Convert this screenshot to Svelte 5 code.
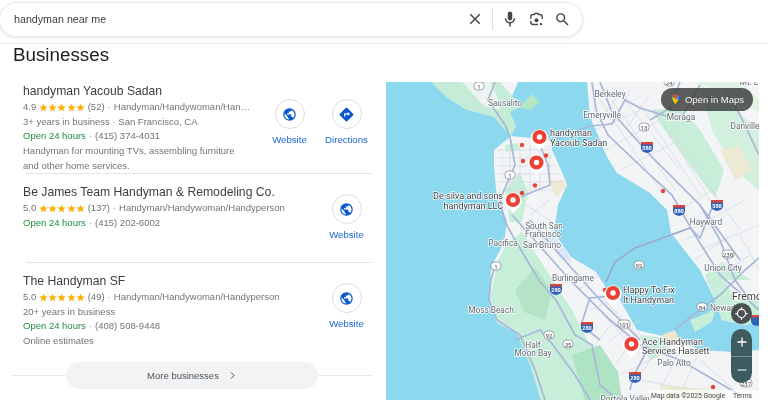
<script>
  const stars = [0, 1, 2, 3, 4];
  const businesses = [
    { name: 'handyman Yacoub Sadan', rating: '4.9', count: '(52)', cat: 'Handyman/Handywoman/Han…', extra: '3+ years in business · San Francisco, CA', phone: '(415) 374-4031', notes: ['Handyman for mounting TVs, assembling furniture', 'and other home services.'], directions: true, cls: 'r1' },
    { name: 'Be James Team Handyman & Remodeling Co.', rating: '5.0', count: '(137)', cat: 'Handyman/Handywoman/Handyperson', extra: '', phone: '(415) 202-6002', notes: [], directions: false, cls: 'r2' },
    { name: 'The Handyman SF', rating: '5.0', count: '(49)', cat: 'Handyman/Handywoman/Handyperson', extra: '20+ years in business', phone: '(408) 508-9448', notes: ['Online estimates'], directions: false, cls: 'r3' }
  ];
  const pins = [[539.5, 137], [536.5, 162.5], [513, 200], [613, 293], [631.5, 344]];
  const dots = [[522, 145], [523, 161], [546, 155.5], [535, 185.5], [522, 193], [663, 191], [605, 290], [713, 387]];
  const shields = [[647, 147, '580'], [679, 210, '880'], [717, 205, '580'], [556, 289, '280'], [587, 327, '280'], [635, 377, '280'], [757, 320, '']];
  const badges = [[479, 86, '1'], [644, 127, '13'], [510, 175, '1'], [496, 266, '1'], [639, 265, '92'], [549, 335, '92'], [568, 344, '35'], [624, 324, '101'], [702, 307, '84'], [728, 254, '238'], [746, 383, '237'], [669, 82, '24']];
  const labels = [
    [505, 106, 'Sausalito'], [610, 97, 'Berkeley'], [602, 118, 'Emeryville'], [681, 120, 'Moraga'], [745, 129, 'Danville'], [749, 85, 'Mt. L'],
    [544, 229, 'South San'], [543, 237, 'Francisco'], [503, 246, 'Pacifica'], [542, 248, 'San Bruno'],
    [706, 225, 'Hayward'], [723, 271, 'Union City'], [573, 281, 'Burlingame'], [491, 313, 'Moss Beach'],
    [533, 348, 'Half'], [533, 356, 'Moon Bay'], [674, 366, 'Palo Alto'], [724, 311, 'Newark'], [626, 402, 'Portola Valley']
  ];
  const pinLabels = [
    [550, 136, 'handyman', 'start'], [550, 146, 'Yacoub Sadan', 'start'], [503, 199, 'De silva and sons', 'end'], [503, 209, 'handyman LLC', 'end'],
    [623, 293, 'Happy To Fix', 'start'], [623, 303, 'It Handyman', 'start'], [642, 344.5, 'Ace Handyman', 'start'], [642, 354, 'Services Hassett', 'start']
  ];
</script>

<div class="page">
  <header class="top">
    <div class="search">
      <span class="query">handyman near me</span>
      <div class="tools">
        <svg class="ic" viewBox="0 0 24 24"><path d="M19 6.4 17.6 5 12 10.6 6.4 5 5 6.4 10.6 12 5 17.6 6.4 19 12 13.4 17.6 19 19 17.6 13.4 12z" fill="#444746"/></svg>
        <span class="sep"></span>
        <svg class="ic mic" viewBox="0 0 24 24"><path d="M12 14c1.7 0 3-1.3 3-3V5c0-1.7-1.3-3-3-3S9 3.3 9 5v6c0 1.7 1.3 3 3 3zm5-3c0 2.8-2.2 5-5 5s-5-2.2-5-5H5c0 3.5 2.6 6.4 6 6.9V22h2v-4.100c3.400-.5 6-3.400 6-6.900h-2z" fill="#444746"/></svg>
        <svg class="ic lens" viewBox="0 0 24 24"><circle cx="12" cy="13" r="2.8" fill="#444746"/><circle cx="18.2" cy="18.5" r="1.7" fill="#444746"/><path d="M4 11V8a3 3 0 0 1 3-3h2l1-1.500h4L15 5h2a3 3 0 0 1 3 3v3M4 14v2a3 3 0 0 0 3 3h7" fill="none" stroke="#444746" stroke-width="2"/></svg>
        <svg class="ic glass" viewBox="0 0 24 24"><path d="M15.5 14h-.79l-.28-.27A6.471 6.471 0 0 0 16 9.5 6.5 6.5 0 1 0 9.5 16c1.61 0 3.09-.59 4.23-1.57l.27.28v.79l5 4.99L20.49 19l-4.99-5zm-6 0C7.01 14 5 11.99 5 9.5S7.01 5 9.5 5 14 7.01 14 9.5 11.99 14 9.500 14z" fill="#444746"/></svg>
      </div>
    </div>
  </header>

  <h2 class="heading">Businesses</h2>

  <div class="content">
    <section class="list">
      {#each businesses as b, i}
        <article class="biz {b.cls}">
          <div class="info">
            <div class="name">{b.name}</div>
            <div class="line">
              {b.rating}
              <span class="stars">
                {#each stars as s}
                  <svg viewBox="0 0 24 24"><path d="M12 1.8l3.100 7 7.600.7-5.800 5 1.800 7.500L12 18l-6.700 4 1.800-7.500-5.800-5 7.600-.7z" fill="#fbb005"/></svg>
                {/each}
              </span>
              {b.count} <span class="dot">·</span> {b.cat}
            </div>
            {#if b.extra}<div class="line">{b.extra}</div>{/if}
            <div class="line"><span class="open">Open 24 hours</span> <span class="dot">·</span> {b.phone}</div>
            {#each b.notes as n}<div class="line">{n}</div>{/each}
          </div>
          <div class="actions">
            <div class="action">
              <span class="circle">
                <svg viewBox="0 0 24 24"><path d="M12 2a10 10 0 1 0 0 20 10 10 0 0 0 0-20zM4 12c0-.6.1-1.200.2-1.800L9 15v1c0 1.100.9 2 2 2v2a8 8 0 0 1-7-8zm13.900 5.400c-.3-.8-1-1.400-1.900-1.400h-1v-3c0-.6-.4-1-1-1H8v-2h2c.6 0 1-.4 1-1V7h2c1.100 0 2-.9 2-2v-.4a8 8 0 0 1 2.900 12.800z" fill="#0b57d0"/></svg>
              </span>
              <span class="label">Website</span>
            </div>
            {#if b.directions}
              <div class="action">
                <span class="circle">
                  <svg viewBox="0 0 24 24"><path d="M22.400 10.600 13.400 1.600a2 2 0 0 0-2.800 0l-9 9a2 2 0 0 0 0 2.800l9 9a2 2 0 0 0 2.800 0l9-9a2 2 0 0 0 0-2.800zM14 14.500V12h-4v3H8v-4c0-.6.4-1 1-1h5V7.500l3.500 3.500-3.500 3.500z" fill="#0b57d0"/></svg>
                </span>
                <span class="label">Directions</span>
              </div>
            {/if}
          </div>
        </article>
        {#if i < 2}<hr class="rule" />{/if}
      {/each}
      <div class="more-row">
        <span class="more-line"></span>
        <button class="more">More businesses
          <svg viewBox="0 0 24 24"><path d="M8 4l8 8-8 8" fill="none" stroke="#4d5156" stroke-width="2.6"/></svg>
        </button>
        <span class="more-line"></span>
      </div>
    </section>

    <div class="map">
      <svg class="mapsvg" viewBox="386 82 373 318">
        <rect x="386" y="82" width="373" height="318" fill="#8bd8ef"/>
        <!-- Marin -->
        <path d="M431 82 447 98 467 110 494 117 505 130 511 136 516 126 510 112 522 106 512 96 518 82Z" fill="#c4ecd6"/>
        <path d="M520 108 531 94 540 102 531 110Z" fill="#b4e6c6"/>
        <path d="M462 82 490 82 497 96 500 110 484 106Z" fill="#eef3f0"/>
        <path d="M500 82 518 82 512 96Z" fill="#f2f4f6"/>
        <!-- SF + peninsula + south -->
        <path d="M511 136 551 140 552 150 562 172 567 185 558 205 554 232 571 257 596 272 612 297 620 300 637 330 667 337 680 340 700 350 733 352 759 350V400H541L531 367 517 333 497 323 490 300 491 267 504 243 507 220 497 200 494 167 494 150Z" fill="#f2f4f6"/>
        <path d="M497 262 506 245 522 232 545 268 572 310 590 345 612 400H541L531 367 517 333 497 323 490 300Z" fill="#c7eed9"/>
        <path d="M515 290 535 268 552 290 545 320 524 312Z" fill="#b4e4c5"/>
        <path d="M572 355 600 345 618 372 622 400H585Z" fill="#aee3c3"/>
        <path d="M505 190 520 172 528 192 522 222 510 222Z" fill="#c7eed9"/>
        <path d="M505 145 518 143 520 150 506 152Z" fill="#c7eed9"/>
        <path d="M640 335 664 338 668 352 650 360Z" fill="#c7eed9"/>
        <path d="M662 335 675 330 680 342 668 348Z" fill="#efe7cd"/>
        <path d="M660 385 720 390 715 400H665Z" fill="#efe9d4"/>
        <path d="M548 180 566 180 567 187 556 197Z" fill="#efe9d4"/>
        <path d="M535 232 562 258 572 262 565 248 550 232Z" fill="#dce6f7"/>
        <!-- East bay -->
        <path d="M587 82 590 117 597 133 607 157 617 173 650 193 667 210 671 233 700 270 715 300 722 320 745 325 759 322V82Z" fill="#f2f4f6"/>
        <path d="M651 110 680 108 700 130 724 170 715 198 690 165 668 135Z" fill="#c7eed9"/>
        <path d="M700 85 735 110 759 130V190L735 170 712 130Z" fill="#d2f0de"/>
        <path d="M720 150 740 145 752 170 735 180Z" fill="#ece9d4"/>
        <path d="M696 82 740 82 759 100V112Z" fill="#dff2e4"/>
        <path d="M705 275 722 262 759 285V322L745 325 722 320Z" fill="#c7eed9"/>
        <path d="M725 280 759 280V300L735 300Z" fill="#f2f4f6"/>
        <path d="M690 320 715 310 712 322 695 332Z" fill="#c7eed9"/>
        <!-- Streets -->
        <g stroke="#d3d8e2" stroke-width=".7" fill="none">
          <path d="M498 150H550M498 158H552M498 166H555M498 174H560M498 182H562M500 190H556M510 145V195M520 145V195M530 145V195M540 145V190M550 145V185"/>
          <path d="M600 100 660 190M612 100 675 190M625 100 680 170M640 105 700 195M655 110 710 200M670 130 740 230M595 130 640 110M605 150 660 120M620 170 680 140M680 210 720 185M690 230 745 200M700 250 759 225M618 95 600 120M630 90 612 125M650 95 625 130"/>
          <path d="M590 300 640 355M600 295 665 365M615 320 590 350M640 330 615 365M660 345 640 375M680 350 660 390M700 350 680 395M640 380 720 395M700 360 740 395M578 290 600 275M590 310 612 300M610 340 640 320M630 355 655 340M620 375 650 360"/>
          <path d="M530 215 550 200M526 205 552 222M685 240 715 225M695 260 730 235M705 285 750 255M740 235 759 270"/>
        </g>
        <!-- Highways -->
        <g stroke="#a9b7d8" stroke-width="1.7" fill="none">
          <path d="M495 82 488 100 505 125 510 137 515 165 500 200 505 222 515 240 540 282 556 300 575 335 592 345 600 385 618 400"/>
          <path d="M592 82 596 110 608 135 650 175 672 195 695 235 720 275 759 310"/>
          <path d="M600 82 612 112 650 155 700 205 740 260"/>
          <path d="M553 140 590 126 612 124 625 100 640 108 680 120 700 85"/>
          <path d="M540 145 548 165 550 185 525 195 510 205"/>
          <path d="M512 215 530 235 570 280 610 320 640 345 680 360 740 395"/>
          <path d="M530 220 560 255 600 300 640 340"/>
          <path d="M606 282 615 262 635 248 690 228 700 238 715 200"/>
          <path d="M611 296 590 298 581 325 600 340"/>
          <path d="M496 262 491 280 489 300 497 320 520 335 535 370 545 400"/>
          <path d="M515 340 540 330 553 345 575 375 590 400"/>
          <path d="M646 352 634 375 630 390"/>
          <path d="M674 330 700 310 720 295 745 270 759 258"/>
          <path d="M725 90 740 115 759 155"/>
          <path d="M650 120 670 108 680 82"/>
          <path d="M700 205 720 240 735 280 750 300"/>
        </g>
        <path d="M606 282 615 262 635 248 690 228" stroke="#94a6cc" stroke-width="1.2" fill="none"/>

        {#each shields as [x, y, t]}
          <path d="M{x - 6} {y - 5}h12v6q0 4-6 5q-6-1-6-5z" fill="#2f63b8"/>
          <rect x={x - 6} y={y - 5} width="12" height="2.5" fill="#d8433c"/>
          <text x={x} y={y + 3} class="shield">{t}</text>
        {/each}
        {#each badges as [x, y, t]}
          <rect x={x - (t.length > 2 ? 6 : 5)} y={y - 4} width={t.length > 2 ? 12 : 10} height="8" rx="3.5" fill="#fff" stroke="#77808c" stroke-width=".7"/>
          <text x={x} y={y + 2.5} class="badge">{t}</text>
        {/each}
        {#each labels as [x, y, t]}
          <text x={x} y={y} text-anchor="middle" class="place">{t}</text>
        {/each}
        <text x="732" y="300" class="city">Fremont</text>

        {#each dots as [x, y]}
          <circle cx={x} cy={y} r="2.2" fill="#ea4335"/>
        {/each}
        {#each pins as [x, y]}
          <path d="M{x} {y + 13}l-6.200-6a8.700 8.700 0 1 1 12.400 0z" fill="#fff"/>
          <circle cx={x} cy={y} r="4.9" fill="none" stroke="#ea4335" stroke-width="4.4"/>
        {/each}
        {#each pinLabels as [x, y, t, a]}
          <text x={x} y={y} text-anchor={a} class="pinlabel">{t}</text>
        {/each}
        <rect x="649" y="390" width="110" height="10" fill="#fff" opacity=".7"/>
        <text x="651" y="398" class="attr">Map data ©2025 Google</text>
        <text x="733" y="398" class="attr">Terms</text>
      </svg>

      <div class="open-maps">
        <svg viewBox="0 0 24 24"><path d="M12 1a8 8 0 0 0-8 8c0 5.500 5.500 8.500 8 14V1z" fill="#34a853"/><path d="M12 1a8 8 0 0 1 8 8c0 2-1 3.800-2 5.300L12 9z" fill="#4285f4"/><path d="M12 1a8 8 0 0 0-6.400 3.200L12 9l6-4.500A8 8 0 0 0 12 1z" fill="#ea4335"/><path d="M4.500 7 12 9l6 5.300c-2.200 2.700-4.400 4.700-6 8.700-.5-2-2.200-3.500-3.800-5.500z" fill="#fbbc04"/></svg>
        Open in Maps
      </div>
      <div class="controls">
        <div class="locate">
          <svg viewBox="0 0 24 24"><circle cx="12" cy="12" r="6.5" fill="none" stroke="#fff" stroke-width="2"/><path d="M12 2v4M12 18v4M2 12h4M18 12h4" stroke="#fff" stroke-width="2"/></svg>
        </div>
        <div class="zoombox">
          <span class="zbtn">
            <svg viewBox="0 0 12 12"><path d="M6 1.5v9M1.500 6h9" stroke="#fff" stroke-width="1.300"/></svg>
          </span>
          <span class="zbtn second">
            <svg viewBox="0 0 12 12"><path d="M1.500 6h9" stroke="#cfd8d8" stroke-width="1.300"/></svg>
          </span>
        </div>
      </div>
    </div>
  </div>
</div>

<style>
  :global(body) { margin: 0; background: #fff; }
  .page { width: 768px; height: 407px; overflow: hidden; font-family: "Liberation Sans", Arial, sans-serif; color: #70757a; position: relative; filter: blur(.35px); }
  .top { box-sizing: border-box; height: 44px; padding-top: 2px; border-bottom: 1px solid #ebebeb; }
  .search { box-sizing: border-box; width: 584px; height: 34.5px; margin-left: -1px; background: #fff; border-radius: 18px; border: 1px solid #ebebeb; box-shadow: 0 1px 3px rgba(60, 64, 67, .16); display: flex; align-items: center; padding-left: 14px; justify-content: space-between; }
  .query { font-size: 10.7px; color: #3c4043; }
  .tools { display: flex; align-items: center; margin-right: 11px; }
  .ic { width: 18px; height: 18px; display: block; }
  .sep { width: 1px; height: 22px; background: #dadce0; margin: 0 8px; }
  .lens { margin-left: 9px; width: 17px; height: 17px; }
  .glass { margin-left: 9px; width: 17px; height: 17px; }
  .heading { margin: 0 0 0 13px; font-weight: 400; font-size: 18.8px; line-height: 22px; color: #202124; height: 22px; }
  .content { display: flex; margin-top: 16px; align-items: flex-start; }
  .list { width: 372px; flex: none; }
  .biz { display: flex; padding: 9px 0 0 23px; position: relative; box-sizing: border-box; }
  .r1 { height: 91px; padding-top: 0; }
  .r2 { height: 88px; }
  .r3 { height: 99px; }
  .info { flex: 1; min-width: 0; }
  .name { font-size: 12.2px; line-height: 18px; color: #3c4043; white-space: nowrap; }
  .line { font-size: 9.5px; line-height: 14.7px; white-space: nowrap; display: flex; align-items: center; gap: 3px; color: #70757a; height: 14.7px; }
  .dot { color: #9aa0a6; }
  .open { color: #1e8e3e; }
  .stars { display: inline-flex; }
  .stars svg { width: 9.1px; height: 9.1px; display: block; }
  .actions { display: flex; flex: none; margin: 11px -3px 0 0; }
  .r1 .actions { margin-top: 17px; }
  .action { width: 57px; display: flex; flex-direction: column; align-items: center; }
  .circle { box-sizing: border-box; width: 30px; height: 30px; border-radius: 50%; border: 1px solid #dadce0; display: flex; align-items: center; justify-content: center; background: #fff; }
  .circle svg { width: 15px; height: 15px; display: block; }
  .label { font-size: 9.65px; line-height: 14px; margin-top: 4px; color: #1a66d6; }
  .rule { border: 0; height: 1px; background: #e2e3e5; margin: 0 0 0 26px; }
  .more-row { display: flex; align-items: center; margin: 0 0 0 12px; height: 27px; }
  .more-line { flex: 1; height: 1px; background: #e8eaed; }
  .more { width: 252px; height: 27px; border: 0; border-radius: 14px; background: #f1f3f4; color: #4d5156; font: 9.5px "Liberation Sans", Arial, sans-serif; display: flex; align-items: center; justify-content: center; gap: 9px; padding: 0; }
  .more svg { width: 9px; height: 9px; }
  .map { width: 373px; height: 318px; margin-left: 14px; position: relative; flex: none; overflow: hidden; }
  .mapsvg { display: block; width: 373px; height: 318px; font-family: "Roboto", "Liberation Sans", sans-serif; }
  .place { font-size: 8.3px; fill: #5f6670; paint-order: stroke; stroke: #fff; stroke-width: 1.5px; }
  .city { font-size: 10.5px; fill: #3c4043; paint-order: stroke; stroke: #fff; stroke-width: 1.5px; }
  .pinlabel { font-size: 9px; fill: #3c4043; paint-order: stroke; stroke: #fff; stroke-width: 1.5px; }
  .shield { font-size: 5.5px; fill: #fff; text-anchor: middle; font-weight: 700; }
  .badge { font-size: 6px; fill: #444; text-anchor: middle; }
  .attr { font-size: 6.8px; fill: #444; }
  .open-maps { position: absolute; top: 6px; right: 6px; width: 92px; height: 23px; box-sizing: border-box; border-radius: 12px; background: rgba(64, 66, 64, .85); color: #f1f3f4; font-size: 9.5px; display: flex; align-items: center; justify-content: center; gap: 4px; }
  .open-maps svg { width: 11px; height: 13px; }
  .controls { position: absolute; top: 221px; right: 7px; width: 21px; display: flex; flex-direction: column; align-items: center; gap: 5px; }
  .locate { width: 21px; height: 21px; border-radius: 50%; background: #4a4f50; display: flex; align-items: center; justify-content: center; }
  .locate svg { width: 15px; height: 15px; }
  .zoombox { width: 21px; height: 54px; border-radius: 11px; background: #3e5c60; display: flex; flex-direction: column; }
  .zbtn { flex: 1; display: flex; align-items: center; justify-content: center; }
  .zbtn.second { border-top: 1px solid #7b9193; }
  .zbtn svg { width: 12px; height: 12px; }
</style>
